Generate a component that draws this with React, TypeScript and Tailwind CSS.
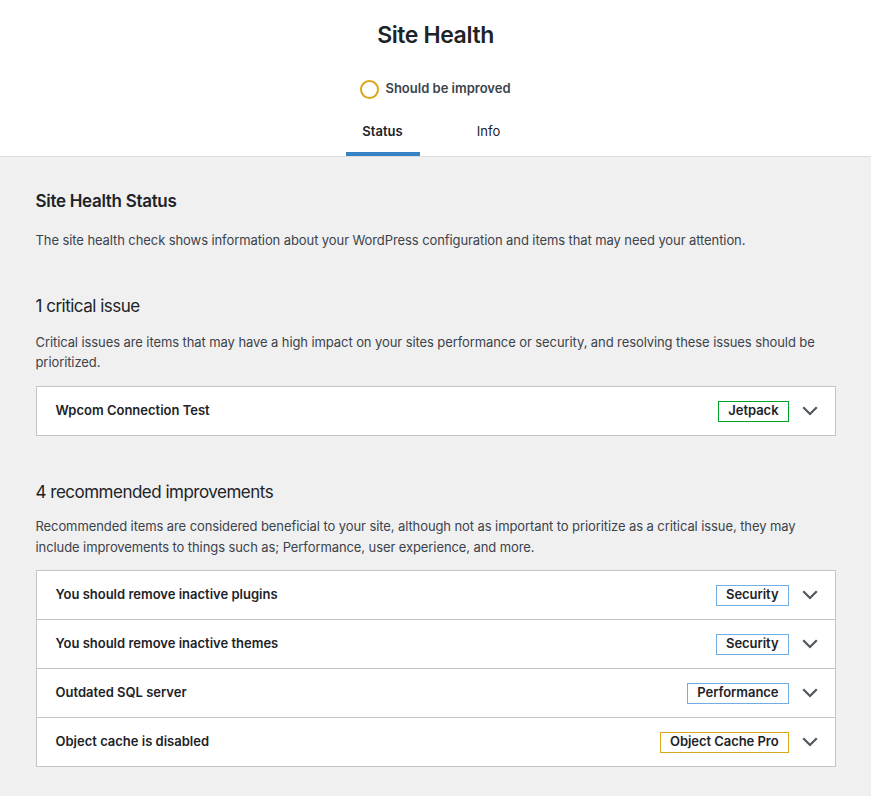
import React from "react";

const FONT = { fontFamily: 'Inter, "Noto Sans", "Liberation Sans", sans-serif' };

function Chevron() {
  return (
    <svg width="16" height="10" viewBox="0 0 16 10" className="block">
      <path d="M2 2 L8 8 L14 2" fill="none" stroke="#50575e" strokeWidth="2.2" strokeLinecap="square" strokeLinejoin="miter" />
    </svg>
  );
}

type Item = { title: string; badge: string; color: string };

function Accordion({ items }: { items: Item[] }) {
  return (
    <div className="border border-[#c3c4c7] bg-white divide-y divide-[#c3c4c7] tracking-normal">
      {items.map((it) => (
        <div key={it.title} className="box-content h-[48px] flex items-center pl-[19px] pr-[17px]">
          <span className="flex-1 text-[13px] font-semibold text-[#1d2327]">{it.title}</span>
          <span
            className="border px-[9px] h-[21px] flex items-center text-[13px] font-semibold text-[#1d2327] tracking-[-0.05px]"
            style={{ borderColor: it.color }}
          >
            {it.badge}
          </span>
          <span className="ml-[13px] w-[16px] flex justify-center">
            <Chevron />
          </span>
        </div>
      ))}
    </div>
  );
}

export default function App() {
  return (
    <div className="min-h-[796px] bg-[#f0f0f1] text-[#1d2327]" style={FONT}>
      <header className="bg-white border-b border-[#dcdcde] flex flex-col items-center">
        <h1 className="pt-[22px] text-[23px] leading-[26px] font-semibold tracking-[-0.4px]">Site Health</h1>
        <div className="mt-[31px] flex items-center gap-[6px] h-5">
          <span className="w-[19px] h-[19px] rounded-full border-2 border-[#dba617]" />
          <span className="text-[13px] font-semibold text-[#3c434a]">Should be improved</span>
        </div>
        <nav className="mt-[12px] flex">
          <a className="mx-4 w-[74px] pt-[10px] pb-[11px] leading-5 text-center text-[13px] font-semibold text-[#1d2327] border-b-4 border-[#3582c4]">
            Status
          </a>
          <a className="mx-4 w-[74px] pt-[10px] pb-[11px] leading-5 text-center text-[13px] text-[#1d2327] border-b-4 border-transparent">
            Info
          </a>
        </nav>
      </header>
      <main className="w-[800px] mx-auto pt-[32px] pb-[29px] tracking-[-0.09px]">
        <h2 className="text-[17px] leading-6 font-semibold tracking-[-0.3px]">Site Health Status</h2>
        <p className="mt-[17px] text-[13px] leading-5 text-[#3c434a]">
          The site health check shows information about your WordPress configuration and items that may need your attention.
        </p>
        <h3 className="mt-[44px] text-[17px] leading-6 font-normal tracking-[-0.5px]">1 critical issue</h3>
        <p className="mt-[14px] text-[13px] leading-5 text-[#3c434a]">
          Critical issues are items that may have a high impact on your sites performance or security, and resolving these issues should be prioritized.
        </p>
        <div className="mt-[14px]">
          <Accordion items={[{ title: "Wpcom Connection Test", badge: "Jetpack", color: "#00a32a" }]} />
        </div>
        <h3 className="mt-[44px] text-[17px] leading-6 font-normal tracking-[-0.5px]">4 recommended improvements</h3>
        <p className="mt-[12px] text-[13px] leading-[21px] text-[#3c434a]">
          Recommended items are considered beneficial to your site, although not as important to prioritize as a critical issue, they may include improvements to things such as; Performance, user experience, and more.
        </p>
        <div className="mt-[12px]">
          <Accordion
            items={[
              { title: "You should remove inactive plugins", badge: "Security", color: "#72aee6" },
              { title: "You should remove inactive themes", badge: "Security", color: "#72aee6" },
              { title: "Outdated SQL server", badge: "Performance", color: "#72aee6" },
              { title: "Object cache is disabled", badge: "Object Cache Pro", color: "#dba617" },
            ]}
          />
        </div>
      </main>
    </div>
  );
}
